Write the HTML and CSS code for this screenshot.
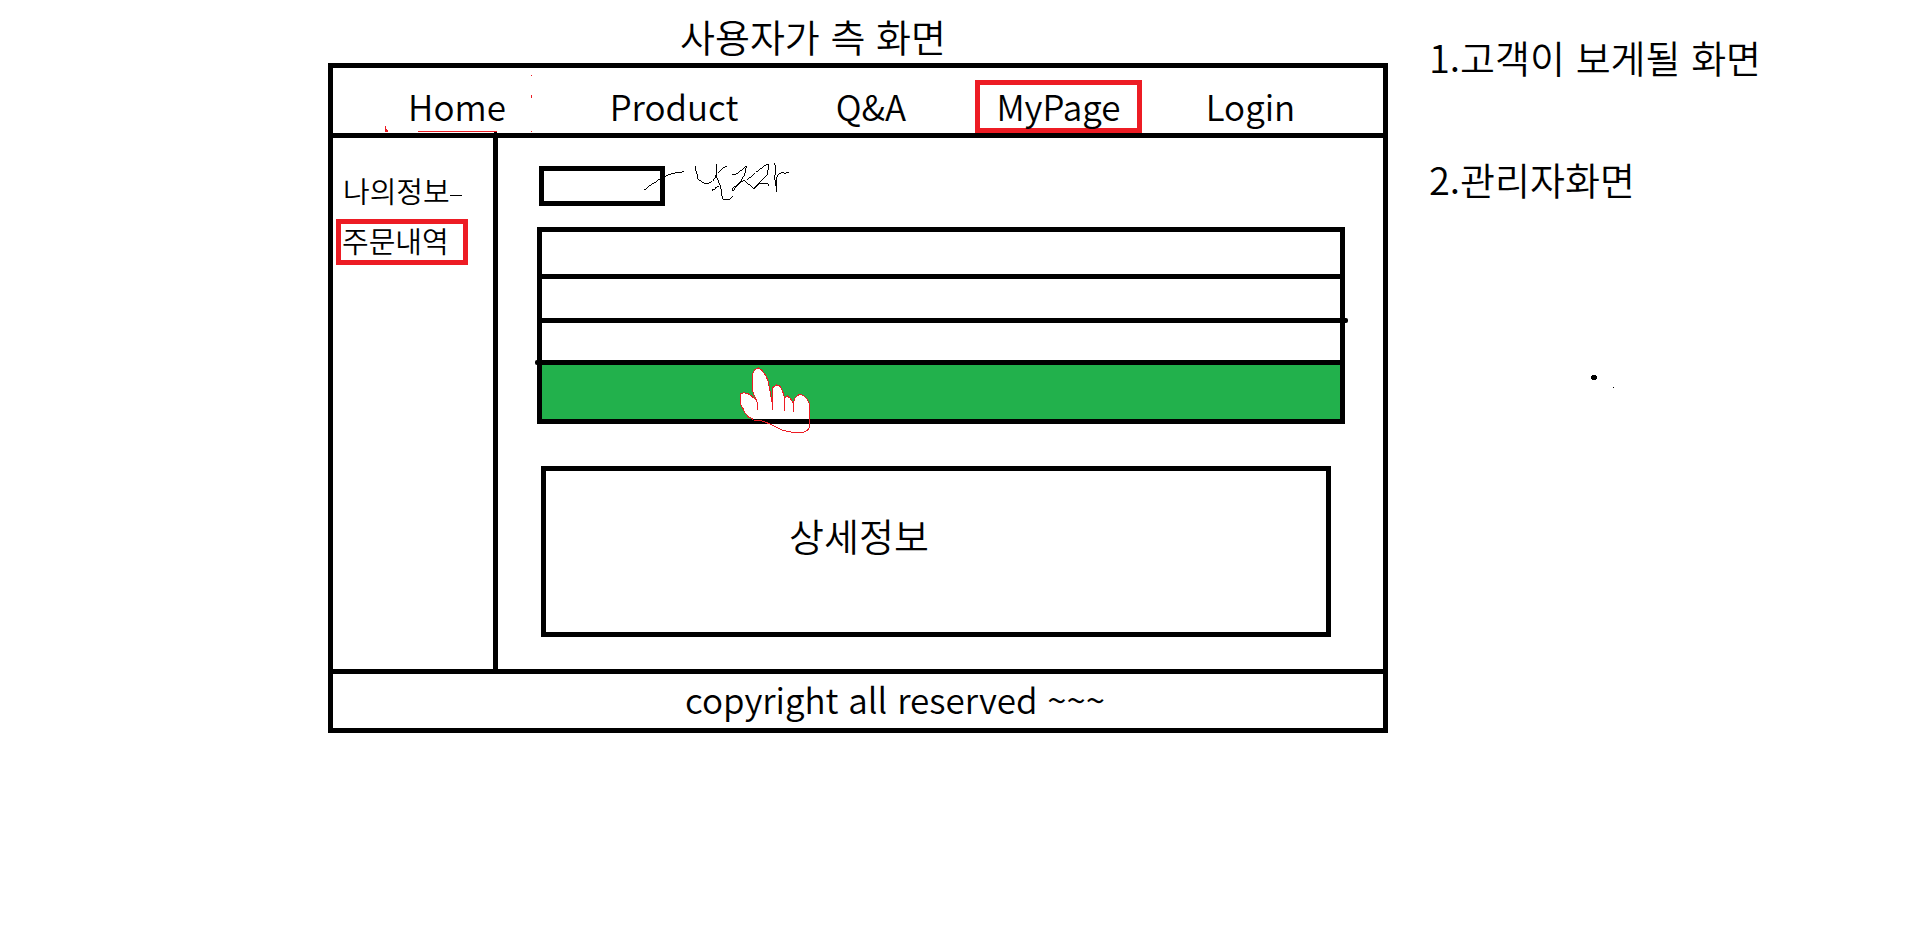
FILE: index.html
```
<!DOCTYPE html>
<html lang="ko">
<head>
<meta charset="utf-8">
<meta name="viewport" content="width=device-width, initial-scale=1">
<title>사용자가 측 화면</title>
<link rel="stylesheet" href="styles.css">
</head>
<body>
<div class="board">
  <main class="mockup">
    <h1 class="title">사용자가 측 화면</h1>
    <div class="frame">
      <header class="header">
        <nav class="nav">
          <a class="nav-link" href="#home">Home</a>
          <a class="nav-link" href="#product">Product</a>
          <a class="nav-link" href="#qna">Q&amp;A</a>
          <a class="nav-link active" href="#mypage">MyPage</a>
          <a class="nav-link" href="#login">Login</a>
        </nav>
        <svg class="red-marks" viewBox="0 0 200 65" aria-hidden="true">
          <path d="M52 58h1v3h1v1h1v2h-3zM85 63h79v1h-79zM198 7h1v1h-1zM198 27h1v3h-1zM198 63h1v1h-1z"/>
          <path class="ink" d="M161 64h3v1h-3z"/>
        </svg>
      </header>
      <div class="body">
        <aside class="sidebar">
          <a class="side-link dashed" href="#info">나의정보</a>
          <a class="side-link active" href="#orders">주문내역</a>
        </aside>
        <section class="content">
          <div class="filter">
            <input class="date" type="text" aria-label="날짜">
            <svg class="scribble" viewBox="340 20 450 130" aria-hidden="true">
              <path d="M341 119l6-2 14-12 12-7 14-10 14-7 16-8 20-5 14-1 10-3M497 46v13l4 9 2 14 9 10 11 7 13 1 12-6 8-10 5-16v-28 40l7 19 5 10 2 16 2 13 3 9 6 2h9l8-3 5-7M565 68l8-9 8-7 10-4M547 124v-7l6 2 6-7 9-5M608 74l10-1 11-7 10-9 11-9-1 14-6 16-8 13-8 10-10 8-8 6-1 9 5-5 4-6 26-24 10 10 9 6 12 12M653 88l14-9 12-12 14-11 12-9 14-6-2 14-3 17-9 12-14 14-12 10-7 7 5-1 11-12 17-3 10 1 6 9M737 38l1 20-1 24 2 20 3 11v14-42l5-12 10-5 8 1 14-2"/>
            </svg>
          </div>
          <ul class="orders">
            <li class="row row-first"></li>
            <li class="row row-second"></li>
            <li class="row row-third"></li>
            <li class="row row-selected">
              <svg class="hand" viewBox="50 50 225 200" aria-hidden="true">
                <path class="palm" d="M97 207L85 203 74 190 68 177 59 161 59 133 69 130 81 131 94 140 104 147 99 132 96 112 95 76 103 61 114 55 124 62 136 78 143 94 148 119 153 148 157 158 157 114 169 106 179 110 187 126 193 145 201 139 211 148 219 163 222 148 230 139 238 133 251 138 261 149 268 164 268 207z"/>
                <path class="outline" d="M97 211v-4L85 203 74 190 68 177 59 161V133l10-3 12 1 13 9 13 11 4 9v22-22l-5-15-7-12-3-20-1-37 8-15 11-6 10 7 12 16 7 16 5 25 5 29 4 16v18-68l12-8 10 4 8 16 6 19v40-40l8-6 10 9 8 15v25-22l3-18 8-8 8-6 13 5 10 11 7 15v69l-6 7-11 7h-38l-27-6-17-8-19-10-12-5-18-6h-18"/>
              </svg>
            </li>
          </ul>
          <div class="detail">상세정보</div>
        </section>
      </div>
      <footer class="footer">copyright all reserved ~~~</footer>
    </div>
  </main>
  <aside class="notes">
    <p class="note">1.고객이 보게될 화면</p>
    <p class="note">2.관리자화면</p>
    <svg class="dots" viewBox="0 0 24 14" aria-hidden="true">
      <path d="M1 0h4v1h1v3h-1v1h-4v-1h-1v-3h1zM22 12h1v1h-1z"/>
    </svg>
  </aside>
</div>
</body>
</html>
```
FILE: styles.css
```
* {
  box-sizing: border-box;
}

body {
  margin: 0;
  background: #fff;
  color: #000;
  font-family: "Noto Sans CJK KR", sans-serif;
  font-size: 35px;
  font-weight: 350;
  line-height: 48px;
}

a {
  color: inherit;
  text-decoration: none;
}

.board {
  display: grid;
  grid-template-columns: 328fr 1060fr 526fr;
}

.mockup {
  grid-column: 2;
  min-width: 0;
}

.title,
.note,
.detail {
  font-size: 38px;
}

.title {
  margin: 0;
  padding: 12px 90px 3px 0;
  font-weight: 350;
  text-align: center;
}

.frame {
  border: 5px solid #000;
}

.header {
  position: relative;
  padding-top: 12px;
  border-bottom: 5px solid #000;
}

.nav {
  display: grid;
  grid-template-columns: 248fr 186fr 208fr 167fr 217fr 24fr;
}

.nav-link {
  padding: 5px 0 6px;
  line-height: 42px;
  text-align: center;
}

.nav-link.active {
  padding: 0 0 1px;
  border: 5px solid #ed1c24;
}

.red-marks {
  position: absolute;
  left: 0;
  bottom: 0;
  width: 200px;
  height: 65px;
  fill: #ed1c24;
}

.ink {
  fill: #000;
}

.body {
  display: grid;
  grid-template-columns: 165fr 885fr;
  border-bottom: 5px solid #000;
}

.sidebar {
  display: flex;
  flex-direction: column;
  align-items: flex-start;
  gap: 6px;
  padding: 29px 0 0 3px;
  border-right: 5px solid #000;
  font-size: 29px;
}

.side-link {
  display: flex;
  align-items: center;
  padding-left: 7px;
  line-height: 46px;
}

.side-link.dashed::after {
  content: "";
  width: 12px;
  height: 1px;
  margin-top: 10px;
  background: #000;
}

.side-link.active {
  align-items: flex-start;
  width: 132px;
  height: 46px;
  padding-left: 1px;
  border: 5px solid #ed1c24;
  line-height: 32px;
}

.content {
  padding: 28px 38px 32px 39px;
}

.filter {
  position: relative;
  display: flex;
  padding-left: 2px;
}

.date {
  width: 126px;
  height: 40px;
  padding: 0 8px;
  border: 5px solid #000;
  border-radius: 0;
  background: #fff;
  font: inherit;
  font-size: 20px;
}

.scribble {
  position: absolute;
  left: 106px;
  top: -9px;
  width: 150px;
  height: 43px;
  fill: none;
  stroke: #000;
  stroke-width: 3;
  shape-rendering: crispEdges;
}

.orders {
  margin: 21px 0 42px;
  padding: 0;
  border: 5px solid #000;
  list-style: none;
}

.row {
  position: relative;
  border-bottom: 5px solid #000;
}

.row-first {
  height: 47px;
}

.row-second {
  height: 44px;
}

.row-third {
  height: 42px;
}

.row-second::after,
.row-third::before {
  content: "";
  position: absolute;
  bottom: -5px;
  width: 8px;
  height: 5px;
  border-radius: 2px;
  background: #000;
}

.row-second::after {
  right: -8px;
}

.row-third::before {
  left: -7px;
}

.row-selected {
  height: 54px;
  border-bottom: 0;
  background: #22b14c;
}

.hand {
  position: absolute;
  left: 195px;
  top: 1px;
  width: 75px;
  height: 67px;
  shape-rendering: crispEdges;
}

.palm {
  fill: #fff;
}

.outline {
  fill: none;
  stroke: #ed1c24;
  stroke-width: 3;
}

.detail {
  margin: 0 14px 0 4px;
  padding: 40px 154px 73px 0;
  border: 5px solid #000;
  text-align: center;
}

.footer {
  padding: 1px 0 5px 74px;
  text-align: center;
}

.notes {
  padding: 33px 0 0 41px;
}

.note {
  margin: 0 0 74px;
}

.dots {
  display: block;
  width: 24px;
  height: 14px;
  margin: 172px 0 0 162px;
}
```
